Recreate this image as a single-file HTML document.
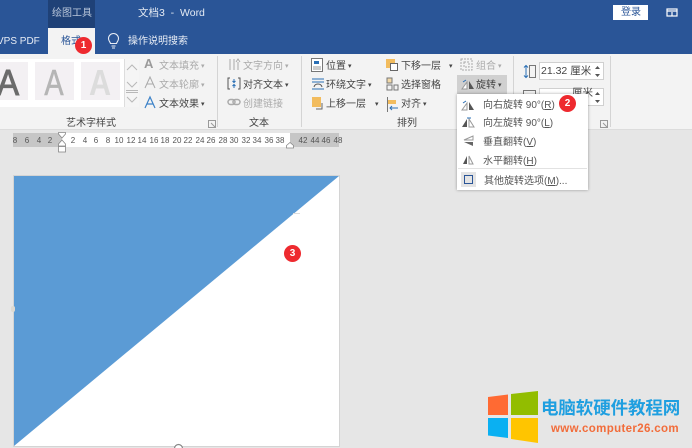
<!DOCTYPE html>
<html lang="zh">
<head>
<meta charset="utf-8">
<style>
html,body{margin:0;padding:0;background:#e6e6e6}
#p{position:relative;width:692px;height:448px;overflow:hidden;background:#e6e6e6;font-family:"Liberation Sans","Noto Sans CJK SC",sans-serif;font-size:10px;color:#444}
#p div{position:absolute}
.t{position:absolute;white-space:nowrap;line-height:14px;font-size:10px;color:#444;margin-top:2px}
.g{color:#aaa}
.A{position:absolute;width:50px;text-align:center;top:65px;font-size:36px;line-height:36px}
.d{font-size:7px;margin-left:2px;vertical-align:1px}
.n{position:absolute;top:135px;font-size:8px;line-height:12px;color:#555;white-space:nowrap;transform:translateX(-50%)}
.b{position:absolute;width:17px;height:17px;border-radius:50%;background:#ee2a2f;color:#fff;font-size:10px;line-height:17px;text-align:center;font-weight:bold}
svg{position:absolute;overflow:visible}
u{text-decoration:underline}
</style>
</head>
<body>
<div id="p">
<!-- title bar -->
<div style="left:0;top:0;width:692px;height:54px;background:#2a5597"></div>
<div style="left:48px;top:0;width:47px;height:28px;background:#1f4177"></div>
<span class="t" style="left:52px;top:5px;color:#b9c6da;font-size:10px">绘图工具</span>
<span class="t" style="left:138px;top:4px;color:#e4eaf3;font-size:10.5px">文档3 &nbsp;- &nbsp;Word</span>
<div style="left:613px;top:5px;width:35px;height:15px;background:#fff"></div>
<span class="t" style="left:621px;top:4px;color:#2a5597;font-size:10px">登录</span>
<svg style="left:666px;top:8px" width="12" height="10"><rect x="1" y="1" width="10" height="7" fill="none" stroke="#fff" stroke-width="1.2"/><path d="M1 3H11M6 4V8" stroke="#fff" stroke-width="1.2"/></svg>
<span class="t" style="left:-3px;top:33px;color:#e8edf5;font-size:10px">VPS PDF</span>
<div style="left:48px;top:28px;width:47px;height:26px;background:#f3f3f3"></div>
<span class="t" style="left:61px;top:33px;color:#2a5597;font-size:10px">格式</span>
<svg style="left:107px;top:33px" width="13" height="16" fill="none" stroke="#e8edf5" stroke-width="1.1"><path d="M3.5 10.5C3 8.5 1.5 8 1.5 5.5A5 5 0 0 1 11.5 5.5C11.5 8 10 8.500 9.500 10.500Z"/><path d="M4.500 13H8.500M5 15H8"/></svg>
<span class="t" style="left:128px;top:33px;color:#e8edf5;font-size:10px">操作说明搜索</span>
<!-- ribbon -->
<div style="left:0;top:54px;width:692px;height:75px;background:#f3f3f3"></div>
<div style="left:0;top:129px;width:692px;height:1px;background:#dcdcdc"></div>
<div style="left:0;top:59px;width:124px;height:48px;background:#fff"></div>
<div style="left:0;top:62px;width:28px;height:38px;background:#f3f0f3"></div>
<div style="left:35px;top:62px;width:39px;height:38px;background:#f3f0f3"></div>
<div style="left:81px;top:62px;width:39px;height:38px;background:#f3f0f3"></div>
<span class="A" style="left:-17px;color:#6b6b6b;transform:scaleX(.92);-webkit-text-stroke:1px #6b6b6b">A</span>
<span class="A" style="left:29px;color:#b5b5b5;transform:scaleX(.8);-webkit-text-stroke:.6px #b5b5b5">A</span>
<span class="A" style="left:75px;color:#dcdcdc;font-weight:bold;transform:scaleX(.85)">A</span>
<div style="left:124px;top:59px;width:15px;height:48px;background:#f5f5f5;border-left:1px solid #ddd;box-sizing:border-box"></div>
<svg style="left:125px;top:60px" width="14" height="46" fill="none" stroke="#b8b8b8" stroke-width="1"><path d="M2 10L7 5L12 10M2 22L7 27L12 22M1 30.500H13M1 32.500H13M2 37L7 42L12 37"/></svg>
<span class="t" style="left:144px;top:55px;font-size:13px;color:#9a9a9a;font-weight:bold">A</span>
<span class="t g" style="left:159px;top:58px">文本填充<span class="d">▾</span></span>
<svg style="left:144px;top:76px" width="12" height="13" fill="none" stroke="#aaa"><path d="M1 12L6 1L11 12M3 8H9"/></svg>
<span class="t g" style="left:159px;top:77px">文本轮廓<span class="d">▾</span></span>
<svg style="left:144px;top:96px" width="12" height="13" fill="none" stroke="#3c82c8" stroke-width="1.2"><path d="M1 12L6 1L11 12M3 8H9"/></svg>
<span class="t" style="left:159px;top:96px">文本效果<span class="d">▾</span></span>
<span class="t" style="left:66px;top:115px;color:#444">艺术字样式</span>
<svg style="left:208px;top:120px" width="8" height="8" fill="none" stroke="#999"><path d="M.5 .5H7.500V7.500H.5ZM3 3L7 7"/></svg>
<div style="left:217px;top:56px;width:1px;height:71px;background:#d4d4d4"></div>
<svg style="left:228px;top:58px" width="13" height="13" fill="none" stroke="#aaa"><path d="M2 1V12M6 1V12M10 4V12M8 4L10 1L12 4"/></svg>
<span class="t g" style="left:243px;top:58px">文字方向<span class="d">▾</span></span>
<svg style="left:227px;top:77px" width="14" height="13" fill="none" stroke="#555"><path d="M3 1H1V12H3M11 1H13V12H11" /><path d="M7 2V5M5.500 4L7 5.500L8.500 4M7 11V8M5.500 9L7 7.500L8.500 9" stroke="#2a6fb5"/></svg>
<span class="t" style="left:243px;top:77px">对齐文本<span class="d">▾</span></span>
<svg style="left:227px;top:98px" width="14" height="9" fill="none" stroke="#aaa" stroke-width="1.500"><rect x="1" y="1.500" width="7" height="5" rx="2.500"/><rect x="6" y="1.500" width="7" height="5" rx="2.500"/></svg>
<span class="t g" style="left:243px;top:96px">创建链接</span>
<span class="t" style="left:249px;top:115px">文本</span>
<div style="left:301px;top:56px;width:1px;height:71px;background:#d4d4d4"></div>
<svg style="left:311px;top:58px" width="13" height="14"><rect x=".5" y=".5" width="11" height="13" fill="#fff" stroke="#777"/><rect x="3" y="3" width="5" height="3" fill="#2a6fb5"/><path d="M2 9H10M2 11H10" stroke="#999"/></svg>
<span class="t" style="left:326px;top:58px">位置<span class="d">▾</span></span>
<svg style="left:311px;top:78px" width="14" height="12" fill="none"><path d="M1 1H13M1 4H13M1 11H13" stroke="#2a6fb5"/><path d="M3 9C4 5 10 5 11 9" stroke="#555"/></svg>
<span class="t" style="left:326px;top:77px">环绕文字<span class="d">▾</span></span>
<svg style="left:311px;top:97px" width="14" height="14"><rect x="1" y="0" width="9" height="10" fill="#f2bc5e"/><path d="M11 6V12H5" fill="none" stroke="#666"/></svg>
<span class="t" style="left:326px;top:96px">上移一层</span><span class="t" style="left:375px;top:96px;font-size:7px">▾</span>
<svg style="left:385px;top:58px" width="14" height="14"><rect x="1" y="1" width="9" height="9" fill="#f2bc5e"/><rect x="5.500" y="5.500" width="7" height="7" fill="#fff" stroke="#666"/></svg>
<span class="t" style="left:401px;top:58px">下移一层</span><span class="t" style="left:449px;top:58px;font-size:7px">▾</span>
<svg style="left:386px;top:77px" width="14" height="14" fill="none" stroke="#777"><rect x="1" y="1" width="5" height="5" fill="#f2d9a8"/><rect x="1" y="8" width="5" height="5"/><rect x="8" y="8" width="4" height="5"/></svg>
<span class="t" style="left:401px;top:77px">选择窗格</span>
<svg style="left:386px;top:97px" width="13" height="15"><path d="M1.500 0V15" stroke="#777"/><rect x="2" y="3" width="8" height="4" fill="#f2bc5e"/><path d="M12 11H4M6 9L4 11L6 13" fill="none" stroke="#2a6fb5"/></svg>
<span class="t" style="left:401px;top:96px">对齐<span class="d">▾</span></span>
<span class="t" style="left:397px;top:115px">排列</span>
<svg style="left:460px;top:58px" width="14" height="14" fill="none" stroke="#aaa" stroke-dasharray="2 1"><rect x="1" y="1" width="11" height="11"/><rect x="4" y="4" width="5" height="5"/></svg>
<span class="t g" style="left:476px;top:58px">组合<span class="d">▾</span></span>
<div style="left:457px;top:75px;width:50px;height:20px;background:#d0d0d0"></div>
<svg style="left:461px;top:79px" width="14" height="11"><path d="M1 10L6 3V10Z" fill="#fff" stroke="#999"/><path d="M8 10V2L13 10Z" fill="#555"/><path d="M2 3L5 1" stroke="#2a6fb5"/></svg>
<span class="t" style="left:476px;top:77px">旋转<span class="d">▾</span></span>
<div style="left:513px;top:56px;width:1px;height:71px;background:#d4d4d4"></div>
<svg style="left:523px;top:65px" width="14" height="13" fill="none"><rect x="6.500" y=".5" width="6" height="12" stroke="#777"/><path d="M3 1V12" stroke="#2a6fb5"/><path d="M1 2.500L3 .5L5 2.500M1 10.500L3 12.500L5 10.500" stroke="#2a6fb5"/></svg>
<div style="left:539px;top:62px;width:65px;height:18px;background:#fff;border:1px solid #d0d0d0;box-sizing:border-box"></div>
<span class="t" style="left:541px;top:62px;font-size:10.5px">21.32 厘米</span>
<svg style="left:594px;top:65px" width="7" height="13" fill="#555"><path d="M1 4L3.500 1L6 4ZM1 9H6L3.500 12Z"/></svg>
<svg style="left:523px;top:90px" width="14" height="13" fill="none" stroke="#777"><rect x=".5" y=".5" width="12" height="7"/></svg>
<div style="left:539px;top:88px;width:65px;height:18px;background:#fff;border:1px solid #d0d0d0;box-sizing:border-box"></div>
<span class="t" style="left:572px;top:84px;font-size:10.5px">厘米</span>
<svg style="left:594px;top:91px" width="7" height="13" fill="#555"><path d="M1 4L3.500 1L6 4ZM1 9H6L3.500 12Z"/></svg>
<svg style="left:600px;top:120px" width="8" height="8" fill="none" stroke="#999"><path d="M.5 .5H7.500V7.500H.5ZM3 3L7 7"/></svg>
<div style="left:610px;top:56px;width:1px;height:71px;background:#d4d4d4"></div>
<!-- ruler -->
<div style="left:13px;top:133px;width:326px;height:14px;background:#fff"></div>
<div style="left:13px;top:133px;width:49px;height:14px;background:#c6c6c6"></div>
<div style="left:290px;top:133px;width:49px;height:14px;background:#c6c6c6"></div>
<span class="n" style="left:15px">8</span><span class="n" style="left:27px">6</span><span class="n" style="left:39px">4</span><span class="n" style="left:50px">2</span>
<span class="n" style="left:73px">2</span><span class="n" style="left:85px">4</span><span class="n" style="left:96px">6</span><span class="n" style="left:108px">8</span>
<span class="n" style="left:119px">10</span><span class="n" style="left:131px">12</span><span class="n" style="left:142px">14</span><span class="n" style="left:154px">16</span><span class="n" style="left:165px">18</span><span class="n" style="left:177px">20</span><span class="n" style="left:188px">22</span><span class="n" style="left:200px">24</span><span class="n" style="left:211px">26</span><span class="n" style="left:223px">28</span><span class="n" style="left:234px">30</span><span class="n" style="left:246px">32</span><span class="n" style="left:257px">34</span><span class="n" style="left:269px">36</span><span class="n" style="left:280px">38</span>
<span class="n" style="left:303px">42</span><span class="n" style="left:315px">44</span><span class="n" style="left:326px">46</span><span class="n" style="left:338px">48</span>
<svg style="left:58px;top:132px" width="9" height="21" fill="#fff" stroke="#888" stroke-width=".8"><path d="M.5 .5H7.500V2L4 6L.5 2Z"/><path d="M4 8L7.500 12V14H.5V12Z"/><rect x=".5" y="14.500" width="7" height="5.500"/></svg>
<svg style="left:286px;top:142px" width="9" height="7" fill="#fff" stroke="#888" stroke-width=".8"><path d="M4 .5L7.500 3.500V6H.5V3.500Z"/></svg>
<!-- page -->
<div style="left:14px;top:176px;width:325px;height:270px;background:#fff;box-shadow:0 0 0 1px #d4d4d4"></div>
<svg style="left:14px;top:176px" width="325" height="270"><polygon points="0,0 325,0 0,270" fill="#5b9bd5"/></svg>
<div style="left:11px;top:306px;width:4px;height:6px;background:#dedad2;border-radius:2px"></div>
<svg style="left:172px;top:442px" width="13" height="6"><circle cx="6.500" cy="6.500" r="4" fill="#fff" stroke="#888" stroke-width="1.200"/></svg>
<div style="left:293px;top:213px;width:7px;height:1px;background:#ddd"></div>
<!-- dropdown -->
<div style="left:457px;top:94px;width:131px;height:96px;background:#fff;box-shadow:0 0 3px rgba(0,0,0,.35)"></div>
<svg style="left:461px;top:100px" width="14" height="12"><path d="M1 10L6 3V10Z" fill="#fff" stroke="#999"/><path d="M8 10V2L13 10Z" fill="#555"/><path d="M2 3L5 1" stroke="#2a6fb5"/></svg>
<span class="t" style="left:483px;top:97px;color:#555">向右旋转 90°(<u>R</u>)</span>
<svg style="left:461px;top:116px" width="14" height="12"><path d="M1 11L6 3V11Z" fill="#555"/><path d="M8 11V3L13 11Z" fill="#fff" stroke="#999"/><path d="M6 2L10 2" stroke="#2a6fb5"/></svg>
<span class="t" style="left:483px;top:115px;color:#555">向左旋转 90°(<u>L</u>)</span>
<svg style="left:463px;top:135px" width="11" height="12"><path d="M10 1V5H1Z" fill="#fff" stroke="#999"/><path d="M10 7V11L1 7Z" fill="#666"/></svg>
<span class="t" style="left:483px;top:134px;color:#555">垂直翻转(<u>V</u>)</span>
<svg style="left:462px;top:154px" width="12" height="11"><path d="M1 10L5 2V10Z" fill="#555"/><path d="M7 10V2L11 10Z" fill="#fff" stroke="#999"/></svg>
<span class="t" style="left:483px;top:153px;color:#555">水平翻转(<u>H</u>)</span>
<div style="left:458px;top:168px;width:129px;height:1px;background:#e2e2e2"></div>
<div style="left:461px;top:172px;width:15px;height:15px;background:#e4e4e4"></div>
<svg style="left:463px;top:174px" width="11" height="11" fill="none" stroke="#2a5597"><rect x="1.500" y="1.500" width="8" height="8"/></svg>
<span class="t" style="left:484px;top:173px;color:#555">其他旋转选项(<u>M</u>)...</span>
<!-- badges -->
<span class="b" style="left:75px;top:37px">1</span>
<span class="b" style="left:559px;top:95px">2</span>
<span class="b" style="left:284px;top:245px">3</span>
<!-- logo -->
<svg style="left:488px;top:391px" width="50" height="52"><path d="M0 6L20 3.500V24H0Z" fill="#ff6a33"/><path d="M23 3L50 0V24H23Z" fill="#92bd00"/><path d="M0 27H20V47L0 44.500Z" fill="#0ab0f2"/><path d="M23 27H50V52L23 48Z" fill="#ffc500"/></svg>
<span class="t" style="left:541px;top:396px;font-size:17.5px;line-height:20px;font-weight:bold;color:#1f9fe0;letter-spacing:-.1px">电脑软硬件教程网</span>
<span class="t" style="left:551px;top:420px;font-size:11.5px;line-height:14px;font-weight:bold;color:#f26c3a;letter-spacing:.35px">www.computer26.com</span>
</div>
</body>
</html>
